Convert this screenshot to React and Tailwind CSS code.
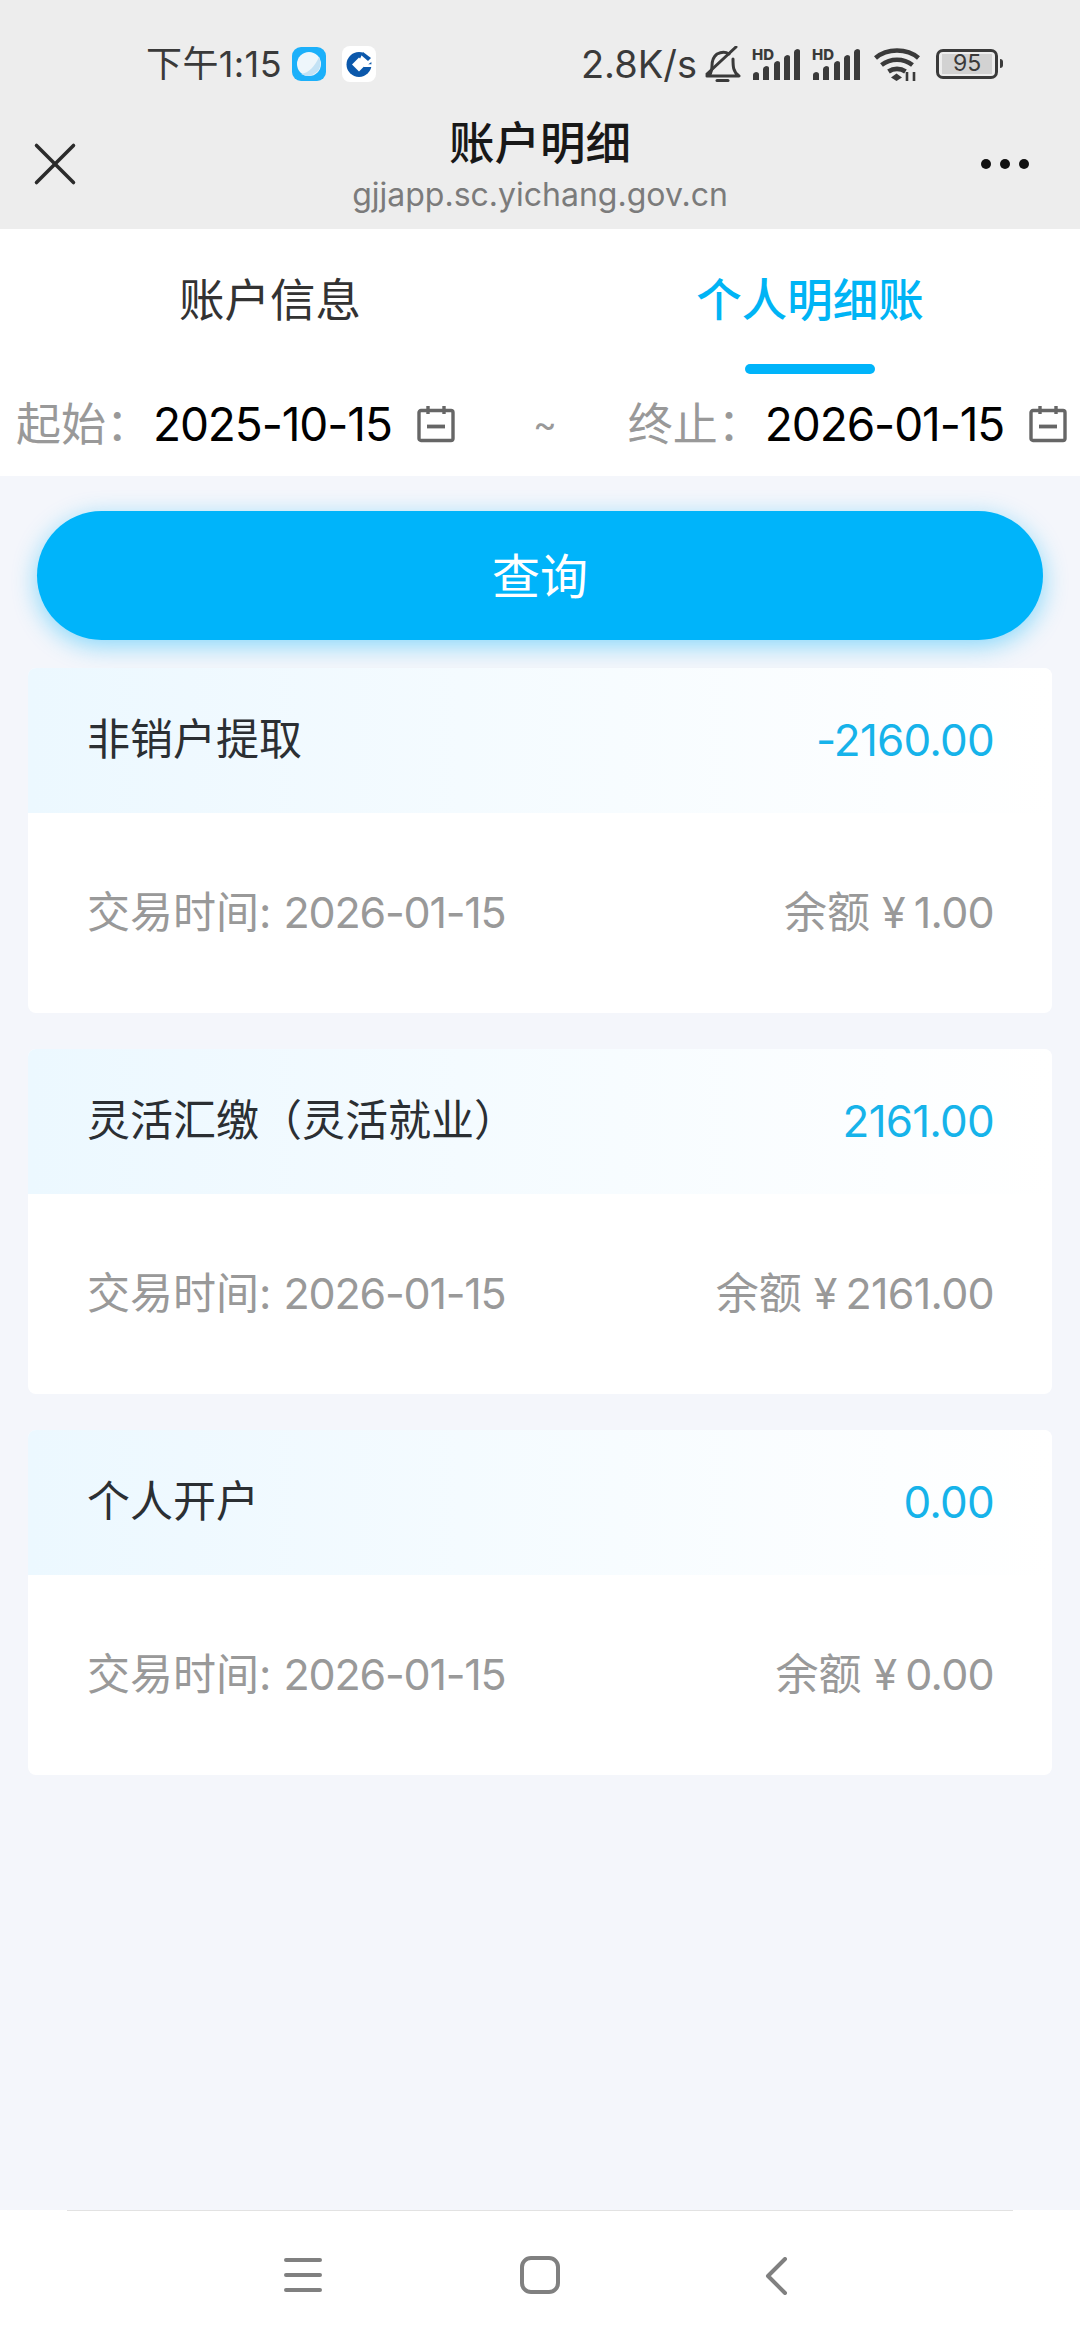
import { X } from "lucide-react";

const font = "font-['Inter','Noto_Sans_CJK_SC',sans-serif]";

const records = [
  { title: "非销户提取", amount: "-2160.00", date: "2026-01-15", balance: "1.00" },
  { title: "灵活汇缴（灵活就业）", amount: "2161.00", date: "2026-01-15", balance: "2161.00" },
  { title: "个人开户", amount: "0.00", date: "2026-01-15", balance: "0.00" },
];

const CalendarIcon = () => (
  <svg width="38" height="38" viewBox="0 0 38 38" fill="none" stroke="#666" strokeWidth="3.4">
    <rect x="2" y="5.5" width="34" height="30" rx="2" />
    <path d="M11 1v8M27 1v8" />
    <path d="M10 21.5h18" strokeWidth="3.8" />
  </svg>
);

const Signal = () => (
  <svg className="overflow-visible" width="49" height="32" viewBox="0 0 49 32" fill="#3a3a3a">
    <text x="0" y="11.5" fontSize="15" fontWeight="800" fontFamily="Inter">HD</text>
    <path d="M1 32v-5q0-2.500 3-3 3 0 3 2.500V32z" />
    <path d="M11 32V21q0-2 3-3 3 0 3 2v12z" />
    <path d="M22 32V16q0-2 3-3 3 0 3 2v17z" />
    <path d="M32 32V10q0-2 3-3 3 0 3 2v23z" />
    <path d="M42 32V4q0-2 3-3 3 0 3 2v29z" />
  </svg>
);

const StatusBar = () => (
  <div className="flex h-[126px] items-center pt-[1px] pl-[146px] pr-[77px] text-[36px] leading-none text-[#3a3a3a]">
    <span className="w-[136px] whitespace-nowrap tracking-[0.4px]">下午1:15</span>
    <svg className="ml-[10px]" width="34" height="34" viewBox="0 0 34 34">
      <rect width="34" height="34" rx="9" fill="#1cb0fa" />
      <circle cx="17" cy="17" r="12" fill="#eef6fb" />
      <path d="M27 10c2 5 2 10-1 14-3 3-7 5-12 5l-5-2C17 26 23 19 27 10z" fill="#c3e2f5" />
    </svg>
    <svg className="ml-[16px]" width="34" height="36" viewBox="0 0 34 36">
      <rect width="34" height="36" rx="8" fill="#fff" />
      <circle cx="17" cy="18.500" r="12.500" fill="#0b58ab" />
      <path d="M17 11.500 24 18.500 17 25.500 10 18.500z" fill="#fff" />
      <path d="M22 4 32 14 26 18.500 33 18.500 33 21 22 21 20 18 17 15z" fill="#fff" />
      <path d="M21 6 29 12 26 15 19 9z" fill="#0b58ab" />
      <path d="M25 18.500h5v1.500h-5z" fill="#fff" />
    </svg>
    <span className="ml-auto text-[38px]">2.8K/s</span>
    <svg className="ml-[8px]" width="36" height="36" viewBox="0 0 36 36" fill="none" stroke="#3a3a3a" strokeWidth="3" strokeLinecap="round" strokeLinejoin="round">
      <path d="M2 30c3-1 5-4 5-10 0-5 1-9 5-12 4-2 9-2 12 0M28 13c0 7 0 13 6 17H2" />
      <path d="M2 28 31 1" />
      <path d="M12 34.500h11" strokeWidth="3" />
    </svg>
    <span className="ml-[11px] flex"><Signal /></span>
    <span className="ml-[11px] flex"><Signal /></span>
    <svg className="ml-[13px]" width="46" height="34" viewBox="0 0 46 34" fill="none" stroke="#3a3a3a" strokeWidth="4.600">
      <path d="M1.500 11C13 1 33 1 44.500 11" />
      <path d="M7.500 18c9-7 22-7 31 0" />
      <path d="M14.500 24.500c5-3.500 12-3.500 17 0" />
      <path d="M22.500 26.500 28 30.500 22.500 34 17 30.500z" fill="#3a3a3a" stroke="none" />
      <path d="M33 25v9M40 25v9" strokeWidth="2.600" />
    </svg>
    <div className="ml-[16px] flex items-center">
      <div className="flex h-[30px] w-[62px] items-center justify-center rounded-[7px] border-[3px] border-[#3a3a3a] px-[3px] py-[2px]">
        <span className="flex h-full w-full items-center justify-center bg-[#d2d2d2] text-[23px] text-[#3a3a3a]">95</span>
      </div>
      <div className="ml-[2px] h-[9px] w-[3px] rounded-r-sm bg-[#3a3a3a]" />
    </div>
  </div>
);

const TitleBar = () => (
  <div className="relative h-[103px] bg-[#ededed] text-center">
    <X className="absolute left-[18px] top-[1px]" size={74} strokeWidth={1.15} color="#2b2b2b" />
    <div className="pt-[1px] text-[45.5px] leading-[34px] font-medium text-[#181818]">账户明细</div>
    <div className="mt-[14px] text-[32px] leading-[40px] text-[#7b7b7b]">gjjapp.sc.yichang.gov.cn</div>
    <div className="absolute right-[51px] top-[33px] flex gap-[9px]">
      <span className="h-[10px] w-[10px] rounded-full bg-[#111]" />
      <span className="h-[10px] w-[10px] rounded-full bg-[#111]" />
      <span className="h-[10px] w-[10px] rounded-full bg-[#111]" />
    </div>
  </div>
);

const Tabs = () => (
  <div className="grid h-[143px] grid-cols-2 bg-white text-[45.5px]">
    <div className="pt-[46px] text-center leading-[52px] text-[#333]">账户信息</div>
    <div className="relative pt-[46px] text-center leading-[52px] font-medium text-[#00b4f5]">
      个人明细账
      <div className="absolute bottom-[-2px] left-[205px] h-[10px] w-[130px] rounded-full bg-[#00b4fa]" />
    </div>
  </div>
);

const DateField = ({ label, value }) => (
  <div className="flex items-center">
    <span className="w-[137px] text-[#999]">{label}：</span>
    <span className="w-[264px] text-[46px] tracking-[-1.1px] text-black">{value}</span>
    <CalendarIcon />
  </div>
);

const DateRow = () => (
  <div className="flex h-[104px] items-center bg-white pl-[16px] text-[45px] leading-none">
    <DateField label="起始" value="2025-10-15" />
    <span className="ml-[78px] mr-[71px] text-[36px] text-[#999]">~</span>
    <DateField label="终止" value="2026-01-15" />
  </div>
);

const RecordCard = ({ title, amount, date, balance }) => (
  <div className="overflow-hidden rounded-[8px] bg-white">
    <div className="flex h-[145px] items-center justify-between bg-gradient-to-r from-[#ecf8ff] to-white pb-[2px] pl-[59px] pr-[58px]">
      <span className="text-[43px] text-[#2b2f33]">{title}</span>
      <span className="text-[44px] tracking-[-0.8px] text-[#16b3ea]">{amount}</span>
    </div>
    <div className="flex h-[200px] items-center justify-between pb-[2px] pl-[59px] pr-[58px] text-[43px] text-[#999]">
      <span>
        交易时间: <span className="tracking-[-1.2px]">{date}</span>
      </span>
      <span>
        余额 ¥<span className="ml-[8px] tracking-[-0.7px]">{balance}</span>
      </span>
    </div>
  </div>
);

const BottomNav = () => (
  <div className="mt-auto h-[130px] bg-white">
    <div className="mx-[67px] h-[1px] bg-[#e2e2e2]" />
    <div className="relative">
      <svg className="absolute left-[284px] top-[47px]" width="38" height="34" viewBox="0 0 38 34" stroke="#808080" strokeWidth="4" strokeLinecap="round">
        <path d="M2 2h34M2 17h34M2 32h34" />
      </svg>
      <svg className="absolute left-[520px] top-[45px]" width="40" height="38" viewBox="0 0 40 38" fill="none" stroke="#808080" strokeWidth="4">
        <rect x="2" y="2" width="36" height="34" rx="9" />
      </svg>
      <svg className="absolute left-[765px] top-[46px]" width="24" height="38" viewBox="0 0 24 38" fill="none" stroke="#808080" strokeWidth="4" strokeLinecap="round" strokeLinejoin="round">
        <path d="M20 2 3 19l17 17" />
      </svg>
    </div>
  </div>
);

export default function App() {
  return (
    <div className={`flex h-[2340px] w-[1080px] flex-col overflow-hidden bg-[#f4f6fb] ${font}`}>
      <div className="bg-[#ededed]">
        <StatusBar />
        <TitleBar />
      </div>
      <Tabs />
      <DateRow />
      <div className="px-[37px] pt-[35px]">
        <button className="h-[129px] w-full rounded-full bg-[#00b4fa] pt-[3px] text-[48px] text-white shadow-[0_6px_24px_rgba(0,180,250,0.45)]">查询</button>
      </div>
      <div className="flex flex-col gap-[36px] px-[28px] pt-[28px]">
        {records.map((r) => (
          <RecordCard key={r.title} {...r} />
        ))}
      </div>
      <BottomNav />
    </div>
  );
}
